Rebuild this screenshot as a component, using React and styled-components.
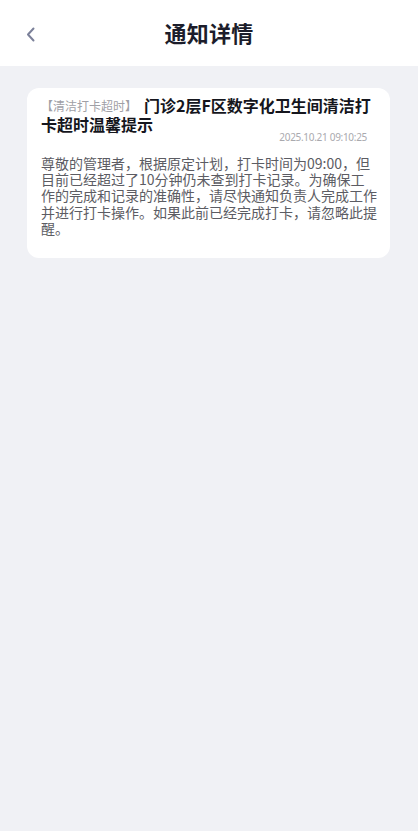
import React from 'react'
import styled, { createGlobalStyle } from 'styled-components'

const cjk = `"Noto Sans CJK SC", "Noto Sans", sans-serif`

const GlobalStyle = createGlobalStyle`
  html, body {
    margin: 0;
    padding: 0;
    background: #f0f1f5;
    font-family: ${cjk};
  }
  #root {
    min-height: 100vh;
  }
`

const Page = styled.div`
  display: flex;
  flex-direction: column;
  min-height: 100vh;
  background: #f0f1f5;
`

const Header = styled.header`
  position: relative;
  display: flex;
  align-items: center;
  justify-content: center;
  height: 66px;
  background: #ffffff;
  padding-bottom: 2px;
  box-sizing: border-box;
`

const BackButton = styled.button`
  position: absolute;
  left: 22px;
  top: 24px;
  width: 18px;
  height: 20px;
  padding: 0;
  border: none;
  background: none;
  display: flex;
  align-items: center;
  justify-content: center;
  cursor: pointer;
`

const Title = styled.h1`
  margin: 0;
  font-size: 22px;
  font-weight: 700;
  line-height: 30px;
  color: #1c1d2b;
  letter-spacing: 0.3px;
`

const Content = styled.main`
  padding: 22px 28px 0 27px;
`

const Card = styled.section`
  background: #ffffff;
  border-radius: 12px;
  padding: 8px 12.5px 21px 14px;
`

const Heading = styled.h2`
  margin: 0;
  font-size: 16px;
  font-weight: 700;
  line-height: 18px;
  color: #15161d;
`

const Tag = styled.span`
  font-size: 12px;
  font-weight: 400;
  color: #a0a0a6;
  margin-right: 7px;
  vertical-align: 1px;
`

const Time = styled.div`
  padding-right: 10.5px;
  text-align: right;
  font-family: "Noto Sans", sans-serif;
  font-size: 10px;
  line-height: 8px;
  letter-spacing: -0.3px;
  color: #a9a9ae;
`

const Body = styled.p`
  margin: 13.5px 0 0 0;
  font-size: 14px;
  line-height: 16.4px;
  color: #5c5c63;
`

const notice = {
  tag: '【清洁打卡超时】',
  title: '门诊2层F区数字化卫生间清洁打卡超时温馨提示',
  time: '2025.10.21 09:10:25',
  body: '尊敬的管理者，根据原定计划，打卡时间为09:00，但目前已经超过了10分钟仍未查到打卡记录。为确保工作的完成和记录的准确性，请尽快通知负责人完成工作并进行打卡操作。如果此前已经完成打卡，请忽略此提醒。',
}

const ChevronLeft = () => (
  <svg width="10" height="15" viewBox="0 0 10 15" fill="none">
    <path d="M7.5 1.5L2 7.5L7.5 13.5" stroke="#7b8099" strokeWidth="2" strokeLinecap="round" strokeLinejoin="round" />
  </svg>
)

export default function App() {
  return (
    <Page>
      <GlobalStyle />
      <Header>
        <BackButton aria-label="返回">
          <ChevronLeft />
        </BackButton>
        <Title>通知详情</Title>
      </Header>
      <Content>
        <Card>
          <Heading>
            <Tag>{notice.tag}</Tag>
            {notice.title}
          </Heading>
          <Time>{notice.time}</Time>
          <Body>{notice.body}</Body>
        </Card>
      </Content>
    </Page>
  )
}
